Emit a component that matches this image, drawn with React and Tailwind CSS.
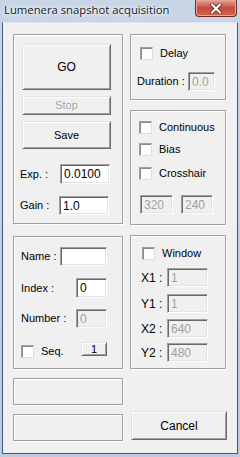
import React from "react";

const etched =
  "border border-[#a0a0a0] shadow-[inset_1px_1px_0_#fff,1px_1px_0_#fff]";
const raised =
  "border border-t-[#e3e3e3] border-l-[#e3e3e3] border-r-[#696969] border-b-[#696969] shadow-[inset_1px_1px_0_#fff,inset_-1px_-1px_0_#a0a0a0] bg-[#f0f0f0] flex items-center justify-center";
const sunken =
  "border border-t-[#a0a0a0] border-l-[#a0a0a0] border-r-white border-b-white shadow-[inset_1px_1px_0_#696969,inset_-1px_-1px_0_#e3e3e3] flex items-center pl-[3px] leading-none";

const Box = ({ className = "", children }) => (
  <div className={`${etched} ${className}`}>{children}</div>
);

const Field = ({ value = "", disabled, className = "" }) => (
  <div
    className={`${sunken} ${disabled ? "bg-[#f0f0f0] text-[#a0a0a0]" : "bg-white text-black"} ${className}`}
  >
    {value}
  </div>
);

const Check = ({ label, className = "" }) => (
  <div className={`flex items-center leading-[13px] ${className}`}>
    <div className="w-[13px] h-[13px] bg-white border border-t-[#a0a0a0] border-l-[#a0a0a0] border-r-[#dcdcdc] border-b-[#dcdcdc] shadow-[inset_1px_1px_0_#8a8a8a]" />
    <span className="ml-[7px]">{label}</span>
  </div>
);

export default function App() {
  return (
    <div
      className="w-[240px] h-[457px] bg-gradient-to-b from-[#c7d5e6] to-[#bccbdf] flex flex-col text-[11px] text-black"
      style={{ fontFamily: '"Liberation Sans", Arial, sans-serif' }}
    >
      {/* title bar */}
      <div className="h-[22px] flex items-start justify-between">
        <div
          className="pl-[4px] pt-[2px] text-[11.3px] text-[#1a1a1a] [text-shadow:0_0_6px_#fff,0_0_3px_#fff]"
          style={{ fontFamily: '"Open Sans", "Noto Sans", sans-serif' }}
        >
          Lumenera snapshot acquisition
        </div>
        <div className="w-[42px] h-[17px] mr-[3px] rounded-b-[4px] border border-t-0 border-[#6e2a23] bg-gradient-to-b from-[#e0a49a] via-[#c8493b] to-[#d2654f] flex items-center justify-center shadow-[inset_0_0_0_1px_#e8a598]">
          <svg width="12" height="11" viewBox="0 0 12 11">
            <path d="M2 1.5 L10 9.5 M10 1.5 L2 9.5" stroke="#4a1510" strokeWidth="3.6" strokeLinecap="square" />
            <path d="M2 1.5 L10 9.5 M10 1.5 L2 9.5" stroke="#fff" strokeWidth="2.2" strokeLinecap="square" />
          </svg>
        </div>
      </div>

      {/* client area */}
      <div className="mx-[2px] mb-[3px] flex-1 bg-[#f0f0f0] border border-[#3f5787] border-t-[#dfe6ef] flex pl-[10px] pt-[11px] gap-[7px]">
        {/* left column */}
        <div className="w-[110px] flex flex-col">
          <Box className="h-[190px] pl-[8px] pt-[9px] flex flex-col">
            <div className={`${raised} w-[89px] h-[46px] text-[12px]`}>GO</div>
            <div className={`${raised} w-[89px] h-[19px] mt-[6px] text-[#a0a0a0] [text-shadow:1px_1px_0_#fff]`}>
              Stop
            </div>
            <div className={`${raised} w-[89px] h-[28px] mt-[6px]`}>Save</div>
            <div className="flex items-center mt-[15px] -ml-[2px]">
              <span className="w-[40px]">Exp. :</span>
              <Field value="0.0100" className="w-[50px] h-[20px] text-[12px]" />
            </div>
            <div className="flex items-center mt-[12px] -ml-[2px]">
              <span className="w-[39px]">Gain :</span>
              <Field value="1.0" className="w-[50px] h-[19px] text-[12px]" />
            </div>
          </Box>

          <Box className="h-[133px] mt-[12px] pl-[7px] pt-[10px] flex flex-col">
            <div className="flex items-center">
              <span className="w-[39px]">Name :</span>
              <Field className="w-[47px] h-[19px]" />
            </div>
            <div className="flex items-center mt-[12px]">
              <span className="w-[55px]">Index :</span>
              <Field value="0" className="w-[31px] h-[20px] text-[12px]" />
            </div>
            <div className="flex items-center mt-[11px]">
              <span className="w-[55px]">Number :</span>
              <Field value="0" disabled className="w-[31px] h-[19px] text-[12px]" />
            </div>
            <div className="flex items-start mt-[14px]">
              <Check label="Seq." className="w-[60px] mt-[3px]" />
              <div className={`${raised} w-[26px] h-[14px]`}>1</div>
            </div>
          </Box>

          <Box className="h-[27px] mt-[9px]" />
          <Box className="h-[27px] mt-[9px]" />
        </div>

        {/* right column */}
        <div className="w-[96px] flex flex-col">
          <Box className="h-[66px] pl-[9px] pt-[12px] flex flex-col">
            <Check label="Delay" />
            <div className="flex items-center mt-[12px] -ml-[3px]">
              <span className="w-[51px]">Duration :</span>
              <Field value="0.0" disabled className="w-[27px] h-[19px] text-[12px]" />
            </div>
          </Box>

          <Box className="h-[115px] mt-[10px] pl-[8px] pt-[10px] flex flex-col">
            <Check label="Continuous" />
            <Check label="Bias" className="mt-[9px]" />
            <Check label="Crosshair" className="mt-[11px]" />
            <div className="flex items-center mt-[15px] ml-[1px] gap-[8px]">
              <Field value="320" disabled className="w-[33px] h-[19px] text-[12px]" />
              <Field value="240" disabled className="w-[32px] h-[19px] text-[12px]" />
            </div>
          </Box>

          <Box className="h-[134px] mt-[10px] pl-[10px] pt-[11px] flex flex-col">
            <Check label="Window" className="ml-[1px]" />
            <div className="flex items-center mt-[8px]">
              <span className="w-[26px] text-[12px]">X1 :</span>
              <Field value="1" disabled className="w-[41px] h-[19px] text-[12px]" />
            </div>
            <div className="flex items-center mt-[7px]">
              <span className="w-[26px] text-[12px]">Y1 :</span>
              <Field value="1" disabled className="w-[41px] h-[19px] text-[12px]" />
            </div>
            <div className="flex items-center mt-[6px]">
              <span className="w-[26px] text-[12px]">X2 :</span>
              <Field value="640" disabled className="w-[41px] h-[19px] text-[12px]" />
            </div>
            <div className="flex items-center mt-[5px]">
              <span className="w-[26px] text-[12px]">Y2 :</span>
              <Field value="480" disabled className="w-[41px] h-[19px] text-[12px]" />
            </div>
          </Box>

          <div className={`${raised} w-[96px] h-[29px] mt-[42px] ml-[1px] text-[12px]`}>Cancel</div>
        </div>
      </div>
    </div>
  );
}
